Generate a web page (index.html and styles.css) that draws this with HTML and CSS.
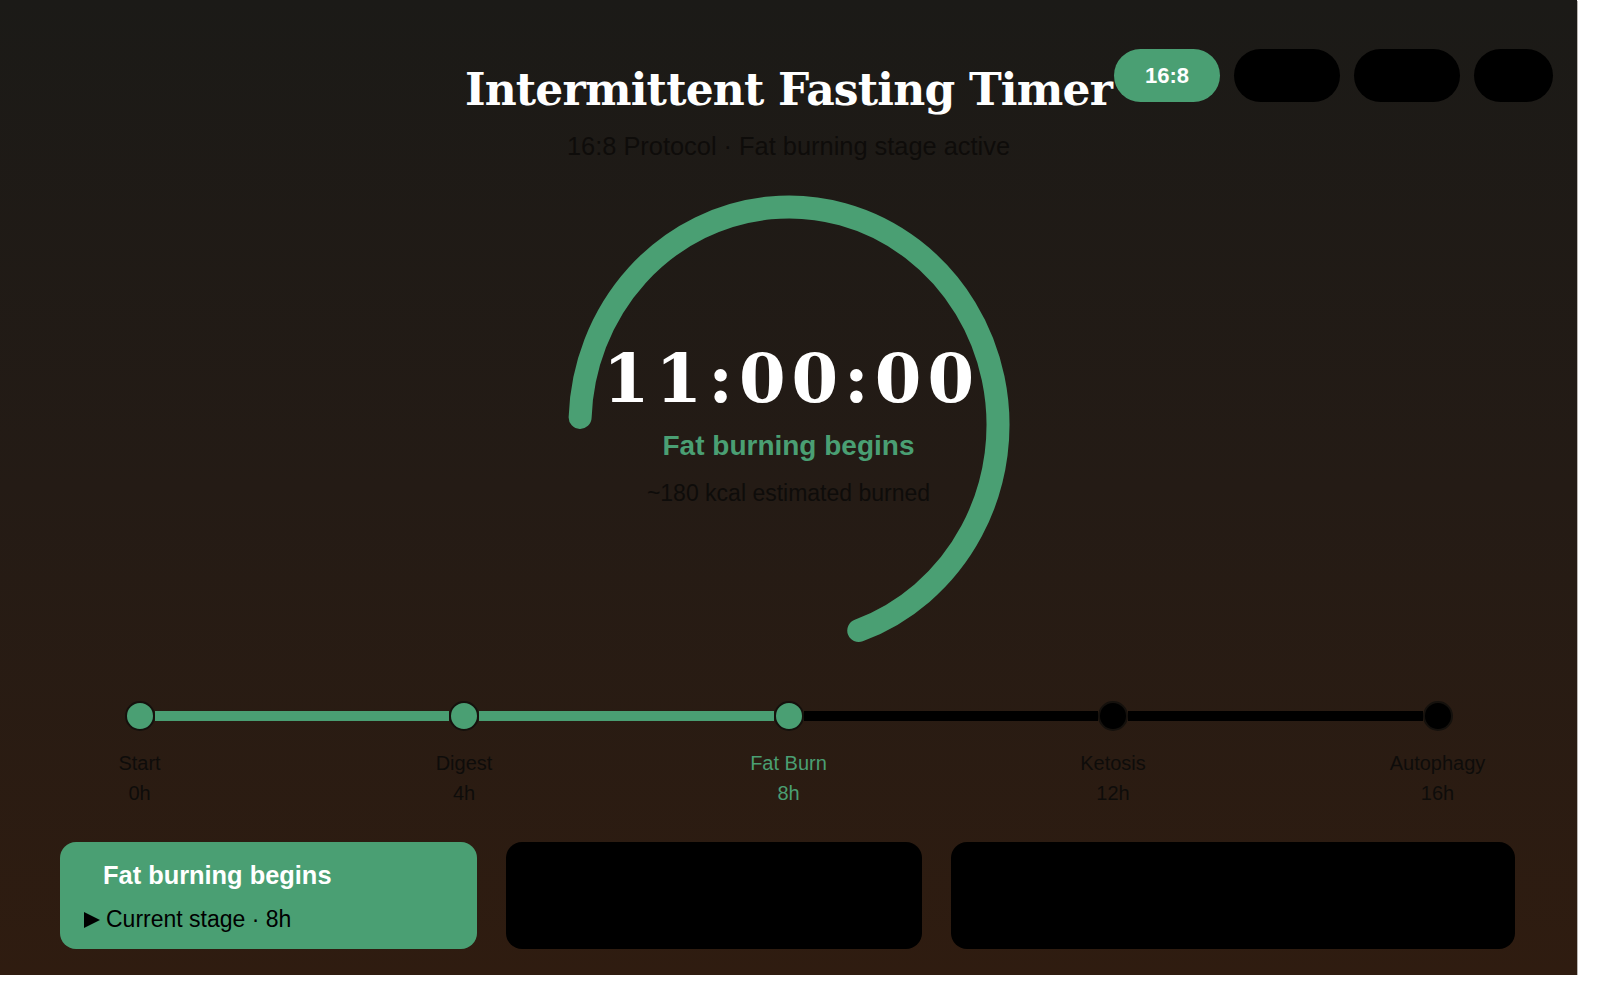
FILE: index.html
```html
<!DOCTYPE html>
<html lang="en">
<head>
<meta charset="utf-8">
<title>Intermittent Fasting Timer</title>
<link rel="stylesheet" href="styles.css">
</head>
<body>
<div class="app">
  <header class="top">
    <div class="top-spacer"></div>
    <h1 class="title">Intermittent Fasting Timer</h1>
    <div class="pills">
      <button class="pill pill-active">16:8</button>
      <button class="pill"></button>
      <button class="pill"></button>
      <button class="pill pill-sm"></button>
    </div>
  </header>
  <p class="subtitle">16:8 Protocol · Fat burning stage active</p>

  <div class="dial">
    <svg class="ring" width="460" height="480" viewBox="0 0 460 480">
      <path d="M 21.13 232.39 A 209 218 0 1 1 299.77 445.49" fill="none" stroke="#4a9f73" stroke-width="23" stroke-linecap="round"/>
    </svg>
    <div class="readout">
      <div class="time">11:00:00</div>
      <div class="stage">Fat burning begins</div>
      <div class="kcal">~180 kcal estimated burned</div>
    </div>
  </div>

  <div class="timeline">
    <div class="track">
      <span class="node node-done"></span>
      <span class="seg seg-done"></span>
      <span class="node node-done"></span>
      <span class="seg seg-done"></span>
      <span class="node node-done"></span>
      <span class="seg"></span>
      <span class="node"></span>
      <span class="seg"></span>
      <span class="node"></span>
    </div>
    <div class="stops">
      <div class="stop"><span>Start</span><span>0h</span></div>
      <div class="stop"><span>Digest</span><span>4h</span></div>
      <div class="stop stop-active"><span>Fat Burn</span><span>8h</span></div>
      <div class="stop"><span>Ketosis</span><span>12h</span></div>
      <div class="stop"><span>Autophagy</span><span>16h</span></div>
    </div>
  </div>

  <div class="cards">
    <div class="card card-active">
      <div class="card-title">Fat burning begins</div>
      <div class="card-sub">
        <svg class="tri" width="18" height="16" viewBox="0 0 18 16"><path d="M1 0 L17 8 L1 16 Z" fill="#000"/></svg>
        <span>Current stage · 8h</span>
      </div>
    </div>
    <div class="card"></div>
    <div class="card"></div>
  </div>
</div>
</body>
</html>
```

FILE: styles.css
```css
html, body {
  margin: 0;
  padding: 0;
  background: #ffffff;
}

.app {
  width: 1577px;
  height: 975px;
  box-sizing: border-box;
  background: linear-gradient(180deg, #1b1a17 0%, #241b15 50%, #2f1c10 100%);
  box-shadow: 1px 1px 0 #b9b5b2;
  display: flex;
  flex-direction: column;
  align-items: center;
  font-family: "Liberation Sans", Arial, sans-serif;
  overflow: hidden;
}

.top {
  width: 100%;
  box-sizing: border-box;
  padding: 0 24px;
  display: grid;
  grid-template-columns: minmax(0, 1fr) auto minmax(0, 1fr);
}

.title {
  margin: 64px 0 0;
  font-family: "DejaVu Serif", "Liberation Serif", serif;
  font-weight: 700;
  font-size: 44px;
  line-height: 52px;
  letter-spacing: -0.8px;
  color: #ffffff;
  white-space: nowrap;
}

.pills {
  justify-self: end;
  align-self: start;
  margin-top: 49px;
  display: flex;
  gap: 14px;
}

.pill {
  width: 106px;
  height: 53px;
  border: none;
  border-radius: 27px;
  background: #000000;
  padding: 0;
  font-family: "Liberation Sans", Arial, sans-serif;
  font-weight: 700;
  font-size: 22px;
  color: #ffffff;
}

.pill-sm {
  width: 79px;
}

.pill-active {
  background: #4a9f73;
}

.subtitle {
  margin: 15px 0 0;
  font-size: 25.4px;
  line-height: 30px;
  color: #0e0c0a;
}

.dial {
  margin-top: 24px;
  display: grid;
  width: 460px;
  height: 480px;
}

.ring,
.readout {
  grid-area: 1 / 1;
}

.readout {
  align-self: center;
  justify-self: center;
  display: flex;
  flex-direction: column;
  align-items: center;
  text-align: center;
  white-space: nowrap;
}

.time {
  padding-left: 6px;
  font-family: "DejaVu Serif", "Liberation Serif", serif;
  font-weight: 700;
  font-size: 67px;
  line-height: 70px;
  letter-spacing: 6px;
  color: #ffffff;
}

.stage {
  margin-top: 16px;
  font-weight: 700;
  font-size: 28px;
  line-height: 32px;
  color: #4a9f73;
}

.kcal {
  margin-top: 17px;
  font-size: 23px;
  line-height: 28px;
  color: #0e0c0a;
}

.timeline {
  margin-top: 36px;
  display: flex;
  flex-direction: column;
  align-items: center;
}

.track {
  width: 1328px;
  height: 30px;
  display: flex;
  align-items: center;
}

.node {
  width: 30px;
  height: 30px;
  box-sizing: border-box;
  border-radius: 50%;
  border: 2px solid #15110d;
  background: #000000;
  flex: none;
}

.node-done {
  background: #4a9f73;
}

.seg {
  flex: 1;
  height: 10px;
  background: #000000;
}

.seg-done {
  background: #4a9f73;
}

.stops {
  margin-top: 17px;
  width: 1418px;
  display: flex;
  justify-content: space-between;
}

.stop {
  width: 120px;
  display: flex;
  flex-direction: column;
  align-items: center;
  font-size: 20px;
  line-height: 30px;
  color: #0e0c0a;
}

.stop-active {
  color: #4a9f73;
}

.cards {
  margin-top: 34px;
  width: 100%;
  box-sizing: border-box;
  padding: 0 62px 0 60px;
  display: grid;
  grid-template-columns: 417fr 416fr 564fr;
  gap: 29px;
}

.card {
  height: 107px;
  box-sizing: border-box;
  border-radius: 16px;
  background: #000000;
}

.card-active {
  background: #4a9f73;
  padding: 19px 20px 0 23px;
}

.card-title {
  padding-left: 20px;
  font-weight: 700;
  font-size: 25.4px;
  line-height: 29px;
  color: #ffffff;
}

.card-sub {
  margin-top: 16px;
  display: flex;
  align-items: center;
  gap: 5px;
  font-size: 23px;
  line-height: 27px;
  color: #000000;
}

.tri {
  flex: none;
}
```
